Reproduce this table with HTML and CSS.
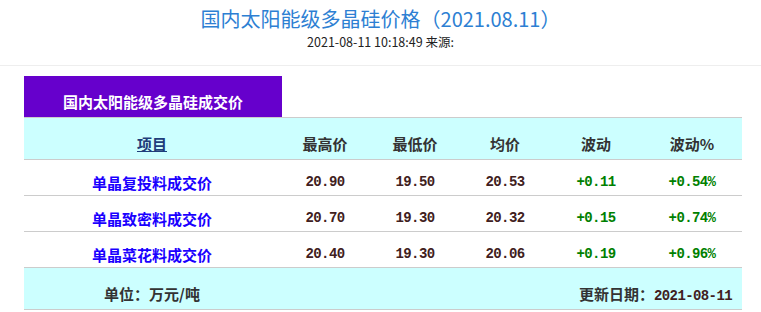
FILE: index.html
```html
<!DOCTYPE html>
<html lang="zh-CN">
<head>
<meta charset="utf-8">
<link rel="stylesheet" href="styles.css">
</head>
<body>
<div class="top">
  <h1 class="title">国内太阳能级多晶硅价格（2021.08.11）</h1>
  <div class="meta">2021-08-11 10:18:49 来源:</div>
</div>
<div class="panel">
  <div class="tab">国内太阳能级多晶硅成交价</div>
  <div class="row head">
    <div class="cell"><span class="link">项目</span></div>
    <div class="cell">最高价</div>
    <div class="cell">最低价</div>
    <div class="cell">均价</div>
    <div class="cell">波动</div>
    <div class="cell">波动%</div>
  </div>
  <div class="row data">
    <div class="cell name">单晶复投料成交价</div>
    <div class="cell num">20.90</div>
    <div class="cell num">19.50</div>
    <div class="cell num">20.53</div>
    <div class="cell num up">+0.11</div>
    <div class="cell num up">+0.54%</div>
  </div>
  <div class="row data">
    <div class="cell name">单晶致密料成交价</div>
    <div class="cell num">20.70</div>
    <div class="cell num">19.30</div>
    <div class="cell num">20.32</div>
    <div class="cell num up">+0.15</div>
    <div class="cell num up">+0.74%</div>
  </div>
  <div class="row data">
    <div class="cell name">单晶菜花料成交价</div>
    <div class="cell num">20.40</div>
    <div class="cell num">19.30</div>
    <div class="cell num">20.06</div>
    <div class="cell num up">+0.19</div>
    <div class="cell num up">+0.96%</div>
  </div>
  <div class="row foot">
    <div class="cell">单位：万元/吨</div>
    <div class="cell date">更新日期：<span class="mono">2021-08-11</span></div>
  </div>
</div>
</body>
</html>
```

FILE: styles.css
```css
body {
  margin: 0;
  background: #fff;
  font-family: "Noto Sans CJK SC", sans-serif;
}
.top {
  border-bottom: 1px solid #eeeeee;
  text-align: center;
  padding-top: 7px;
  height: 58px;
}
.title {
  margin: 0;
  font-size: 20px;
  font-weight: normal;
  line-height: 24px;
  color: #2d7fd3;
}
.meta {
  margin-top: 4px;
  font-size: 12.5px;
  line-height: 14px;
  color: #222;
}
.panel {
  margin: 10px 0 0 24px;
  width: 718px;
}
.tab {
  width: 258px;
  height: 41px;
  box-sizing: border-box;
  padding-top: 10px;
  line-height: 31px;
  background: #6600cc;
  color: #fff;
  font-size: 15px;
  font-weight: bold;
  text-align: center;
}
.row {
  display: grid;
  grid-template-columns: 256px 90px 90px 90px 92px 100px;
  border-top: 1px solid #cccccc;
  text-align: center;
  font-weight: bold;
}
.head, .foot {
  background: #ccffff;
  height: 31px;
  padding-top: 10px;
  line-height: 31px;
  font-size: 15px;
  color: #333;
}
.data {
  height: 25px;
  padding-top: 10px;
  line-height: 25px;
  font-size: 15px;
}
.link {
  color: #1f3d7a;
  text-decoration: underline;
}
.name {
  color: #1a00ff;
}
.num, .mono {
  font-family: "Liberation Mono", monospace;
  font-size: 14px;
  letter-spacing: -0.6px;
  color: #402020;
}
.num.up {
  color: #008000;
}
.foot {
  border-bottom: 1px solid #cccccc;
  grid-template-columns: 256px 1fr;
}
.date {
  text-align: right;
  padding-right: 10px;
}
```
